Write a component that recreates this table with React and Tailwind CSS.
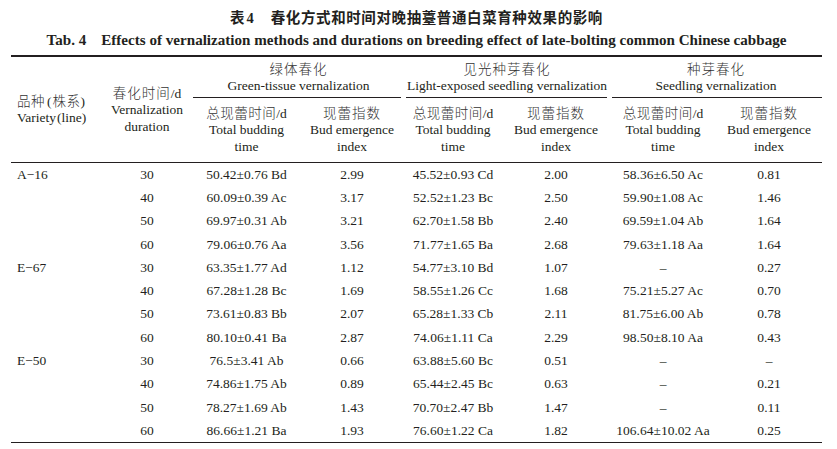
import React from "react";

const rows = [
  ["A−16", "30", "50.42±0.76 Bd", "2.99", "45.52±0.93 Cd", "2.00", "58.36±6.50 Ac", "0.81"],
  ["", "40", "60.09±0.39 Ac", "3.17", "52.52±1.23 Bc", "2.50", "59.90±1.08 Ac", "1.46"],
  ["", "50", "69.97±0.31 Ab", "3.21", "62.70±1.58 Bb", "2.40", "69.59±1.04 Ab", "1.64"],
  ["", "60", "79.06±0.76 Aa", "3.56", "71.77±1.65 Ba", "2.68", "79.63±1.18 Aa", "1.64"],
  ["E−67", "30", "63.35±1.77 Ad", "1.12", "54.77±3.10 Bd", "1.07", "–", "0.27"],
  ["", "40", "67.28±1.28 Bc", "1.69", "58.55±1.26 Cc", "1.68", "75.21±5.27 Ac", "0.70"],
  ["", "50", "73.61±0.83 Bb", "2.07", "65.28±1.33 Cb", "2.11", "81.75±6.00 Ab", "0.78"],
  ["", "60", "80.10±0.41 Ba", "2.87", "74.06±1.11 Ca", "2.29", "98.50±8.10 Aa", "0.43"],
  ["E−50", "30", "76.5±3.41 Ab", "0.66", "63.88±5.60 Bc", "0.51", "–", "–"],
  ["", "40", "74.86±1.75 Ab", "0.89", "65.44±2.45 Bc", "0.63", "–", "0.21"],
  ["", "50", "78.27±1.69 Ab", "1.43", "70.70±2.47 Bb", "1.47", "–", "0.11"],
  ["", "60", "86.66±1.21 Ba", "1.93", "76.60±1.22 Ca", "1.82", "106.64±10.02 Aa", "0.25"],
];

const cols = "grid grid-cols-[90px_92px_107px_104px_98px_108px_106px_106px]";

const cjk = { fontFamily: '"Noto Sans CJK SC", sans-serif' };

function Zh({ children, className = "" }) {
  return (
    <span className={"font-light text-[#333] " + className} style={cjk}>
      {children}
    </span>
  );
}

function Line({ children, className = "" }) {
  return <span className={"block h-[17px] leading-[17px] whitespace-nowrap " + className}>{children}</span>;
}

function SubHead({ zh, en1, en2, slash }) {
  return (
    <div className="flex flex-col items-center pt-[6.5px] pb-[6.5px]">
      <Line>
        <Zh className={slash ? "tracking-[0.5px]" : "tracking-[1px]"}>{zh}</Zh>
        {slash ? "/d" : null}
      </Line>
      <Line>{en1}</Line>
      <Line>{en2}</Line>
    </div>
  );
}

function Group({ zh, en, rule }) {
  return (
    <div className="col-span-2 flex flex-col">
      <div className="flex flex-col items-center pt-[3.5px] pb-[2.5px]">
        <Line>
          <Zh className="tracking-[1px]">{zh}</Zh>
        </Line>
        <Line>{en}</Line>
      </div>
      <div className={"h-px bg-[#231f20] " + rule}></div>
    </div>
  );
}

export default function App() {
  return (
    <div
      className="w-[837px] h-[449px] bg-white text-[#231f20] overflow-hidden"
      style={{ fontFamily: '"Liberation Serif", "Noto Sans CJK SC", serif' }}
    >
      <div className="w-[811px] ml-[11px]">
        <div className="pt-[7px] h-[30px] flex justify-center text-[14.5px] leading-[20px] font-bold" style={cjk}>
          <span className="h-[20px]">
            表<span className="ml-[2px]" style={{ fontFamily: '"Liberation Serif", serif' }}>4</span>
          </span>
          <span className="ml-[17px] tracking-[0.6px] h-[20px]">春化方式和时间对晚抽薹普通白菜育种效果的影响</span>
        </div>
        <div className="h-[25px] flex justify-center text-[15.1px] leading-[20px] font-bold">
          <span>Tab. 4</span>
          <span className="ml-[15px]">Effects of vernalization methods and durations on breeding effect of late-bolting common Chinese cabbage</span>
        </div>
        <div className="h-[1.5px] bg-[#231f20]"></div>
        <div className={cols + " text-[13.5px] border-b border-[#231f20]"}>
          <div className="row-span-2 flex flex-col justify-center pl-[6px]">
            <Line>
              <Zh className="tracking-[0.5px]">品种</Zh>
              <span className="ml-[2px] mr-[1px]">(</span>
              <Zh className="tracking-[0.5px]">株系</Zh>
              <span>)</span>
            </Line>
            <Line>
              Variety<span className="ml-[1px]">(</span>line)
            </Line>
          </div>
          <div className="row-span-2 flex flex-col justify-center items-center">
            <Line className="h-[17.5px]">
              <Zh className="tracking-[1px]">春化时间</Zh>/d
            </Line>
            <Line className="h-[17.5px]">Vernalization</Line>
            <Line className="h-[17.5px]">duration</Line>
          </div>
          <Group zh="绿体春化" en="Green-tissue vernalization" rule="mr-[3px]" />
          <Group zh="见光种芽春化" en="Light-exposed seedling vernalization" rule="ml-[2px] mr-[3px]" />
          <Group zh="种芽春化" en="Seedling vernalization" rule="ml-[2px]" />
          <SubHead zh="总现蕾时间" slash en1="Total budding" en2="time" />
          <SubHead zh="现蕾指数" en1="Bud emergence" en2="index" />
          <SubHead zh="总现蕾时间" slash en1="Total budding" en2="time" />
          <SubHead zh="现蕾指数" en1="Bud emergence" en2="index" />
          <SubHead zh="总现蕾时间" slash en1="Total budding" en2="time" />
          <SubHead zh="现蕾指数" en1="Bud emergence" en2="index" />
        </div>
        <div className="text-[13.5px] border-b-[1.5px] border-[#231f20]">
          {rows.map((r, i) => (
            <div key={i} className={cols + " h-[23.3px] items-center leading-[17px]"}>
              <div className="pl-[6px]">{r[0]}</div>
              {r.slice(1).map((c, j) => (
                <div key={j} className="text-center">{c}</div>
              ))}
            </div>
          ))}
        </div>
      </div>
    </div>
  );
}
